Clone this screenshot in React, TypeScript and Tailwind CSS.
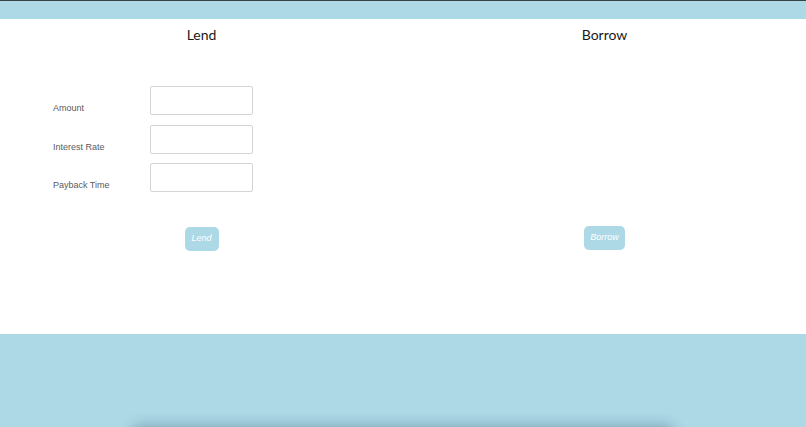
import React from "react";

const fields = ["Amount", "Interest Rate", "Payback Time"];

function Heading({ children }: { children: React.ReactNode }) {
  return (
    <h2 className="pt-[6px] text-center text-[14px] leading-[20px] text-[#1a1a1a] font-['Lato',sans-serif]">
      {children}
    </h2>
  );
}

export default function App() {
  return (
    <div className="relative h-[427px] overflow-hidden bg-[#add8e6] border-t border-[#3b4045] font-['Liberation_Sans',Arial,sans-serif]">
      <div className="pt-[18px]">
        <div className="grid grid-cols-2 h-[315px] bg-white">
          <section className="bg-white">
            <Heading>Lend</Heading>
            <form className="mt-[41px] pl-[53px] flex flex-col gap-[9.5px]">
              {fields.map((f) => (
                <div key={f} className="flex items-end">
                  <label className="w-[97px] pb-[1px] text-[9px] leading-[12px] text-[#5a5a5a]">{f}</label>
                  <input className="w-[103px] h-[29px] border border-[#d4d4d4] rounded-[2px] bg-white outline-none" />
                </div>
              ))}
            </form>
            <div className="mt-[35px] flex justify-center">
              <button className="w-[34px] h-[24px] rounded-[5px] bg-[#add8e6] text-white italic text-[9px]">
                Lend
              </button>
            </div>
          </section>
          <section className="bg-white">
            <Heading>Borrow</Heading>
            <div className="mt-[181px] flex justify-center">
              <button className="w-[41px] h-[24px] rounded-[5px] bg-[#add8e6] text-white italic text-[9px]">
                Borrow
              </button>
            </div>
          </section>
        </div>
        <div className="mt-[94px] mx-auto w-[540px] h-[40px] rounded-[6px] bg-[#add8e6] shadow-[0_-2px_14px_rgba(0,40,60,0.3)]" />
      </div>
    </div>
  );
}
